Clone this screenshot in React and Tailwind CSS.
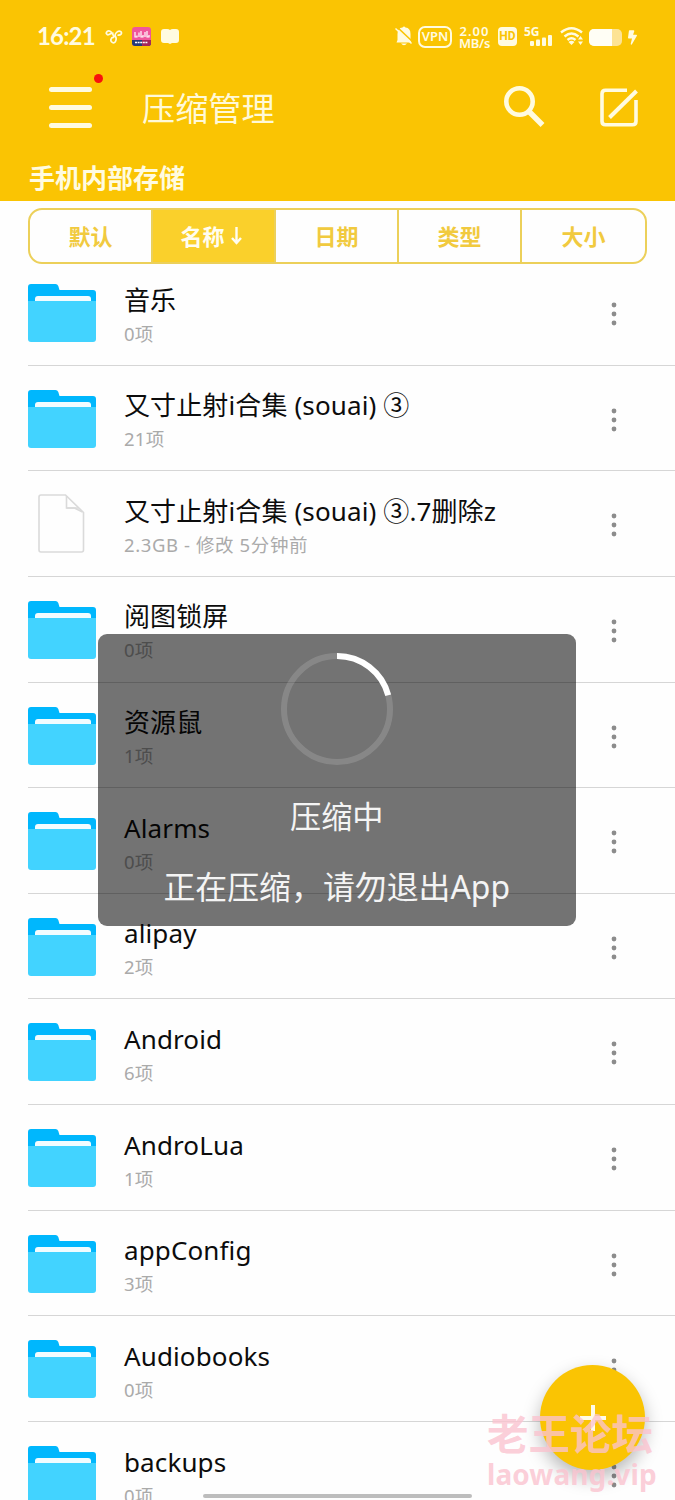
import { FaBolt } from "react-icons/fa";

const files = [
  { name: "音乐", info: "0项" },
  { name: "又寸止射i合集 (souai) ③", info: "21项" },
  { name: "又寸止射i合集 (souai) ③.7删除z", info: "2.3GB - 修改 5分钟前", type: "file" },
  { name: "阅图锁屏", info: "0项" },
  { name: "资源鼠", info: "1项" },
  { name: "Alarms", info: "0项" },
  { name: "alipay", info: "2项" },
  { name: "Android", info: "6项" },
  { name: "AndroLua", info: "1项" },
  { name: "appConfig", info: "3项" },
  { name: "Audiobooks", info: "0项" },
  { name: "backups", info: "0项" },
];

const tabs = ["默认", "名称", "日期", "类型", "大小"];

function FolderIcon() {
  return (
    <svg width="68" height="58" viewBox="0 0 68 58">
      <path d="M0 22V3q0-3 3-3h24.500q2 0 2.800 2l1.200 4H65q3 0 3 3v13z" fill="#00b7fd" />
      <path d="M7 18v-3q0-3 3-3h50q3 0 3 3v3z" fill="#f2fcff" />
      <path d="M0 17h68V55q0 3-3 3H3q-3 0-3-3z" fill="#42d3ff" />
    </svg>
  );
}

function FileIcon() {
  return (
    <svg width="68" height="60" viewBox="0 0 68 60" fill="none" stroke="#dadada" strokeWidth="1.600">
      <path d="M13 1h24.500L55.500 18.500v37.500q0 2-2 2H13q-2 0-2-2V3q0-2 2-2z" />
      <path d="M38.500 2v12h12" />
      <path d="M38.500 14h8l8 4" />
    </svg>
  );
}

function MoreIcon() {
  return (
    <svg width="6" height="24" viewBox="0 0 6 24" fill="#8c8c8c">
      <circle cx="3" cy="3" r="2.400" />
      <circle cx="3" cy="12" r="2.400" />
      <circle cx="3" cy="21" r="2.400" />
    </svg>
  );
}

function StatusBar() {
  return (
    <div className="flex h-[72px] items-center pl-[37px] text-[#fffbe0]">
      <span className="w-[58px] whitespace-nowrap font-['Lato'] text-[24px] leading-6 font-bold tracking-[-0.8px]">16:21</span>
      <svg className="ml-[10px]" width="18" height="15" viewBox="0 0 18 15" fill="none" stroke="currentColor" strokeWidth="1.700">
        <path d="M9 8.500C6 8 4.500 12 7.500 13.500S12 10 10.500 7.500 13 1 15.500 2.500 15.500 6.800 12.500 6M9 8.500C8.500 5 5 .5 2.500 2.200S2 6.500 4 5.500 7 3.500 8.500 4.500" />
      </svg>
      <div className="ml-[9px] h-[19px] w-[19px] overflow-hidden rounded-[3px] bg-[#f0569b]">
        <svg width="19" height="19" viewBox="0 0 19 19">
          <path d="M3 5v5h2V8.500M7 5.500V10M9 4v6h2V8M13 5v5M15 4v6h2V8" fill="none" stroke="#fff" strokeWidth="1.200" />
          <path d="M0 13h19v6H0z" fill="#243b78" />
          <path d="M10 13h9v6h-9z" fill="#a52759" />
          <path d="M3 15.500h13" stroke="#fff" strokeWidth="1.600" strokeDasharray="2 .6" />
        </svg>
      </div>
      <svg className="ml-[10px]" width="18" height="15" viewBox="0 0 18 15" fill="currentColor">
        <path d="M3 0h3q2 0 3 1 1-1 3-1h3q3 0 3 3v8q0 3-3 3h-4l-2 1-2-1H3q-3 0-3-3V3q0-3 3-3z" />
      </svg>
      <svg className="ml-[216px]" width="18" height="20" viewBox="0 0 18 20">
        <path d="M2.500 14V8q0-6 5-6.500Q9-.5 10.500 1.500 15.500 2 15.500 8v6l1 2.500h-15zM6 17.500h6q-3 3.500-6 0z" fill="currentColor" />
        <path d="M1.500 .5l17 16" stroke="#fac403" strokeWidth="1.600" />
        <path d="M.5 2.500l16 15" stroke="currentColor" strokeWidth="1.500" />
      </svg>
      <span className="mt-[1px] ml-[5px] flex h-[22px] w-[34px] items-center justify-center rounded-[7px] border-2 border-current font-['Noto_Sans'] text-[13px] font-semibold">VPN</span>
      <span className="mt-[1px] ml-[7px] flex w-[31px] flex-col items-center whitespace-nowrap font-['Noto_Sans'] text-[13px] leading-[12px] font-semibold">
        <span className="tracking-[1px]">2.00</span>
        <span className="tracking-[-0.300px]">MB/s</span>
      </span>
      <span className="ml-[8px] flex h-[19px] w-[19px] items-center justify-center rounded-[4px] bg-[#fffbe0] font-['Roboto'] text-[12px] font-bold text-[#fac403]">HD</span>
      <div className="ml-[7px] h-[20px] w-[28px]">
        <div className="h-[9px] font-['Noto_Sans'] text-[12px] leading-[11px] font-bold">5G</div>
        <svg width="28" height="11" viewBox="0 0 28 11" fill="currentColor">
          <rect x="6" y="6" width="4" height="5" rx="1" />
          <rect x="12" y="4.500" width="4" height="6.500" rx="1" />
          <rect x="18" y="2.500" width="4" height="8.500" rx="1" />
          <rect x="24" y="0" width="4" height="11" rx="1" />
        </svg>
      </div>
      <svg className="ml-[8px]" width="24" height="18" viewBox="0 0 24 18" fill="none" stroke="currentColor" strokeWidth="2.400">
        <path d="M1 5.500q10.500-8.500 21 0M4.500 9.500q7-6 14 0M7.500 13q4-3.500 8 0" />
        <path d="M11.500 18l-3-3q3-2.500 6 0z" fill="currentColor" stroke="none" />
        <path d="M20.500 9l2.500 3.500h-5zM20.500 18l2.500-3.500h-5z" fill="currentColor" stroke="none" />
      </svg>
      <div className="mt-[2px] ml-[5px] h-[17px] w-[33px] overflow-hidden rounded-[5px] bg-[#fde394]">
        <div className="h-full w-[23px] bg-[#fffef5]" />
      </div>
      <FaBolt className="mt-[2px] ml-[6px] h-[17px] w-[9px]" />
    </div>
  );
}

function TitleBar() {
  return (
    <div className="flex h-[70px] items-center pl-[49px]">
      <div className="relative flex h-[41px] w-[43px] flex-col justify-between">
        <span className="h-[5px] rounded-full bg-[#fffbe0]" />
        <span className="h-[5px] rounded-full bg-[#fffbe0]" />
        <span className="h-[5px] rounded-full bg-[#fffbe0]" />
        <span className="absolute -top-[13px] left-[45px] h-[9px] w-[9px] rounded-full bg-[#f8120c]" />
      </div>
      <h1 className="mt-[3px] ml-[50px] w-[362px] text-[33.200px] leading-[40px] font-normal text-[#fff9d8]">压缩管理</h1>
      <svg width="41" height="42" viewBox="0 0 41 42" fill="none" stroke="#fffbe0">
        <circle cx="15.500" cy="15.500" r="13.200" strokeWidth="4.600" />
        <path d="M25.500 26L38.500 39" strokeWidth="5.500" />
      </svg>
      <svg className="ml-[55px]" width="39" height="39" viewBox="0 0 39 39" fill="none" stroke="#fffbe0" strokeWidth="3.600">
        <path d="M27 2.200H5.500q-3.500 0-3.500 3.500v27.500q0 3.500 3.500 3.500h27q3.500 0 3.500-3.500V12" />
        <path d="M9.500 29.500L36.500 3" strokeWidth="4" />
      </svg>
    </div>
  );
}

function FileRow({ file }) {
  const isFile = file.type === "file";

  return (
    <li className="ml-7 flex h-[105.650px] items-start border-b border-[#d6d6d6]">
      <div className={`w-[96px] shrink-0 ${isFile ? "pt-[23px]" : "pt-[24px]"}`}>{isFile ? <FileIcon /> : <FolderIcon />}</div>
      <div className="w-[487px] shrink-0 pt-[22.500px]">
        <div className="h-[34px] whitespace-nowrap text-[26px] leading-[34px] tracking-[0.120px] text-[#0c0c0c]">{file.name}</div>
        <div
          className={`h-[32px] whitespace-nowrap text-[18.500px] leading-[33px] text-[#aaaaaa] ${
            isFile ? "tracking-[0.600px]" : "tracking-[0.250px]"
          }`}
        >
          {file.info}
        </div>
      </div>
      <div className="shrink-0 pt-[42px]">
        <MoreIcon />
      </div>
    </li>
  );
}

function ProgressDialog() {
  return (
    <div className="absolute top-[634px] left-[97.500px] flex h-[291.500px] w-[478.500px] flex-col items-center rounded-[9px] bg-black/55 pt-[19px] text-[#f4f4f4]">
      <svg width="112" height="112" viewBox="0 0 112 112" fill="none" strokeWidth="6">
        <circle cx="56" cy="56" r="53" stroke="#fff" strokeOpacity="0.15" />
        <path d="M56 3A53 53 0 0 1 107.200 42.300" stroke="#fff" />
      </svg>
      <div className="mt-[29px] text-[31.200px] leading-[44px]">压缩中</div>
      <div className="mt-[27px] whitespace-nowrap text-[31.900px] leading-[44px]">正在压缩，请勿退出App</div>
    </div>
  );
}

function App() {
  return (
    <div className="relative h-[1500px] w-[675px] overflow-hidden bg-[#fefefe] font-['Noto_Sans','Noto_Sans_CJK_SC',sans-serif]">
      <header className="h-[201px] bg-[#fac403]">
        <StatusBar />
        <TitleBar />
        <div className="pt-[19px] pl-[29px] text-[26px] leading-[34px] font-bold text-[#fffbe0]">手机内部存储</div>
      </header>

      <div className="h-[59px] px-7 pt-[7px]">
        <div className="grid h-[56px] w-[619px] grid-cols-5 divide-x-2 divide-[#ecd05a] overflow-hidden rounded-[14px] border-2 border-[#ecd05a]">
          {tabs.map((tab, i) => (
            <button
              key={tab}
              className={`flex items-center justify-center text-[22px] font-bold ${
                i === 1 ? "bg-[#fad02b] pr-[5px] text-[#fffdf0]" : "text-[#f1ca3f]"
              }`}
            >
              {tab}
              {i === 1 && (
                <svg className="ml-[6px]" width="11" height="18" viewBox="0 0 11 18" fill="none" stroke="currentColor" strokeWidth="2.400">
                  <path d="M5.500 0v15M1 11l4.500 5L10 11" />
                </svg>
              )}
            </button>
          ))}
        </div>
      </div>

      <ul>
        {files.map((file) => (
          <FileRow key={file.name} file={file} />
        ))}
      </ul>

      <ProgressDialog />

      <div className="absolute top-[1365px] left-[540px] flex h-[105px] w-[105px] items-center justify-center rounded-full bg-[#fac403] shadow-[0_8px_18px_rgba(0,0,0,0.28)]">
        <svg width="26" height="26" viewBox="0 0 26 26" stroke="#fffbe8" strokeWidth="4">
          <path d="M13 0v26M0 13h26" />
        </svg>
      </div>
      <div className="absolute top-[1493.500px] left-[203px] h-[4.500px] w-[269px] rounded-full bg-[#bdbdbd]" />

      <div className="absolute top-[1410px] left-[487px] whitespace-nowrap font-bold text-[#fbc3cf]/80">
        <div className="text-[41.500px] leading-[48px]">老王论坛</div>
        <div className="text-[28px] leading-[32px] tracking-[0.100px]">laowang.vip</div>
      </div>
    </div>
  );
}

export default App;
